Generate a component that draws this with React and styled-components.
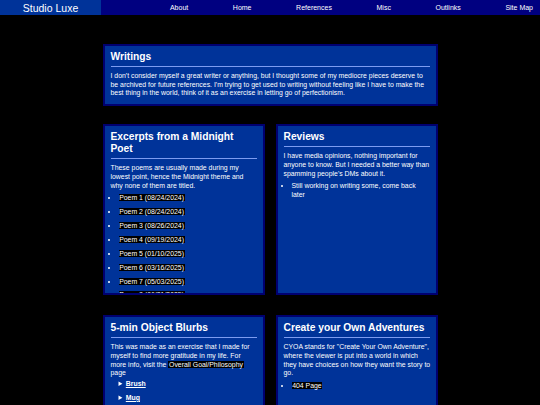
import styled, { createGlobalStyle } from "styled-components";

const GlobalStyle = createGlobalStyle`
  html, body {
    margin: 0;
    padding: 0;
    background: #000;
  }
  body {
    font-family: "Liberation Sans", Arial, sans-serif;
    color: #fff;
  }
`;

const navLinks = ["About", "Home", "References", "Misc", "Outlinks", "Site Map"];

const poems = [
  "Poem 1 (08/24/2024)",
  "Poem 2 (08/24/2024)",
  "Poem 3 (08/26/2024)",
  "Poem 4 (09/19/2024)",
  "Poem 5 (01/10/2025)",
  "Poem 6 (03/16/2025)",
  "Poem 7 (05/03/2025)",
  "Poem 8 (06/21/2025)",
];

const App = () => {
  return (
    <>
      <GlobalStyle />
      <Header>
        <Logo>Studio Luxe</Logo>
        <Nav>
          {navLinks.map((link) => (
            <NavLink key={link} href="#">
              {link}
            </NavLink>
          ))}
        </Nav>
      </Header>

      <Main>
        <Card>
          <Title>Writings</Title>
          <Text>
            I don't consider myself a great writer or anything, but I thought
            some of my mediocre pieces deserve to be archived for future
            references. I'm trying to get used to writing without feeling like
            I have to make the best thing in the world, think of it as an
            exercise in letting go of perfectionism.
          </Text>
        </Card>

        <Grid>
          <Card fixed>
            <Title>Excerpts from a Midnight Poet</Title>
            <Text>
              These poems are usually made during my lowest point, hence the
              Midnight theme and why none of them are titled.
            </Text>
            <List spaced>
              {poems.map((poem) => (
                <li key={poem}>
                  <Mark href="#">{poem}</Mark>
                </li>
              ))}
            </List>
          </Card>

          <Card fixed>
            <Title>Reviews</Title>
            <Text>
              I have media opinions, nothing important for anyone to know. But
              I needed a better way than spamming people's DMs about it.
            </Text>
            <List>
              <li>Still working on writing some, come back later</li>
            </List>
          </Card>
        </Grid>

        <Grid>
          <Card>
            <Title>5-min Object Blurbs</Title>
            <Text>
              This was made as an exercise that I made for myself to find more
              gratitude in my life. For more info, visit the{" "}
              <Mark href="#">Overall Goal/Philosophy</Mark> page
            </Text>
            <Details>
              <summary>Brush</summary>
            </Details>
            <Details>
              <summary>Mug</summary>
            </Details>
          </Card>

          <Card>
            <Title>Create your Own Adventures</Title>
            <Text>
              CYOA stands for "Create Your Own Adventure", where the viewer is
              put into a world in which they have choices on how they want the
              story to go.
            </Text>
            <List>
              <li>
                <Mark href="#">404 Page</Mark>
              </li>
            </List>
          </Card>
        </Grid>
      </Main>
    </>
  );
};

const Header = styled.header`
  display: flex;
  align-items: stretch;
  height: 15px;
  background: #000080;
`;

const Logo = styled.div`
  width: 101px;
  background: #003399;
  display: flex;
  align-items: center;
  justify-content: center;
  font-size: 10.5px;
  color: #fff;
`;

const Nav = styled.nav`
  display: flex;
  align-items: center;
  gap: 44.6px;
  margin-left: auto;
  padding-right: 7px;
`;

const NavLink = styled.a`
  font-size: 7px;
  color: #fff;
  text-decoration: none;
`;

const Main = styled.main`
  width: 335px;
  margin: 0 auto;
  padding-top: 29px;
  display: flex;
  flex-direction: column;
  gap: 18px;
`;

const Grid = styled.div`
  display: grid;
  grid-template-columns: 1fr 1fr;
  gap: 11px;
  & + & {
    margin-top: 2px;
  }
`;

const Card = styled.section`
  background: #003399;
  border: 2px solid #000070;
  padding: 5px 5.2px 6px 6px;
  height: ${(props) => (props.fixed ? "171px" : "auto")};
  box-sizing: border-box;
  overflow: hidden;
`;

const Title = styled.h2`
  margin: 0;
  padding-bottom: 3px;
  border-bottom: 1px solid #7d9cf0;
  font-size: 10.25px;
  line-height: 12px;
  font-weight: bold;
  color: #fff;
`;

const Text = styled.p`
  margin: 5px 0 0;
  font-size: 6.9px;
  line-height: 8.7px;
  color: #fff;
`;

const List = styled.ul`
  margin: 4px 0 0;
  padding-left: 8px;
  font-size: 6.9px;
  line-height: 8.7px;
  color: #fff;
  li {
    margin-bottom: ${(props) => (props.spaced ? "5.2px" : "0")};
  }
`;

const Mark = styled.a`
  background: #000;
  color: #fff;
  padding: 0 0.7px;
  text-decoration: none;
`;

const Details = styled.details`
  margin-top: 2px;
  padding-left: 8px;
  font-size: 6.9px;
  line-height: 8.7px;
  summary {
    font-weight: bold;
    text-decoration: underline;
    color: #fff;
    cursor: pointer;
  }
  & + & {
    margin-top: 5.3px;
  }
`;

export default App;
